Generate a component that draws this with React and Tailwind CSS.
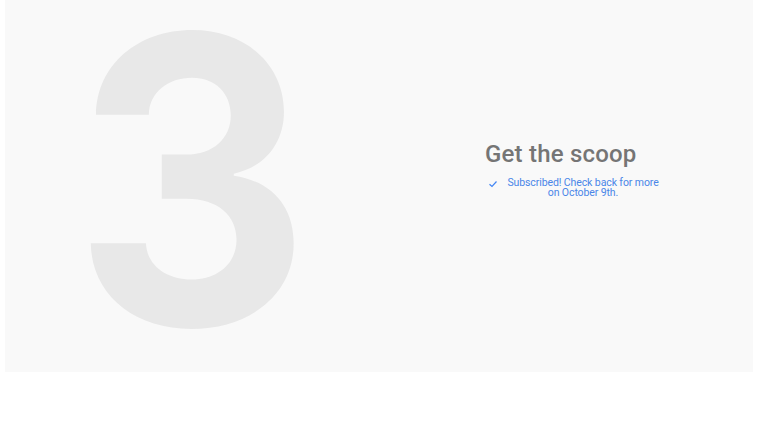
export default function App() {
  return (
    <div className="w-[759px] h-[422px] bg-white" style={{ fontFamily: "Roboto, 'Open Sans', sans-serif" }}>
      <div className="ml-[5px] w-[748px] h-[372px] bg-[#f9f9f9] overflow-hidden flex">
        <div className="w-[480px] shrink-0 pl-[68px]">
          <div className="mt-[9px] text-[400px] leading-[340px] font-bold text-[#e8e8e8] select-none scale-x-[0.92] origin-left" style={{ fontFamily: "Inter, sans-serif" }}>
            3
          </div>
        </div>
        <div className="flex flex-col pt-[140px] w-[220px] shrink-0">
          <h2 className="text-[24px] leading-[28px] font-medium text-[#757575] tracking-[0.2px]">Get the scoop</h2>
          <div className="flex items-start mt-[10px]">
            <svg className="w-[10px] h-[10px] mt-[1px] ml-[3px] mr-[5px] shrink-0 text-[#4285f4]" viewBox="0 0 10 10" fill="none" stroke="currentColor" strokeWidth="1.2">
              <path d="M1.5 5.2 L4 7.5 L8.5 2.5" />
            </svg>
            <p className="text-[10.5px] leading-[10px] tracking-[-0.1px] text-[#4a86e8] text-center w-[160px] shrink-0">
              Subscribed! Check back for more on October 9th.
            </p>
          </div>
        </div>
      </div>
    </div>
  );
}
